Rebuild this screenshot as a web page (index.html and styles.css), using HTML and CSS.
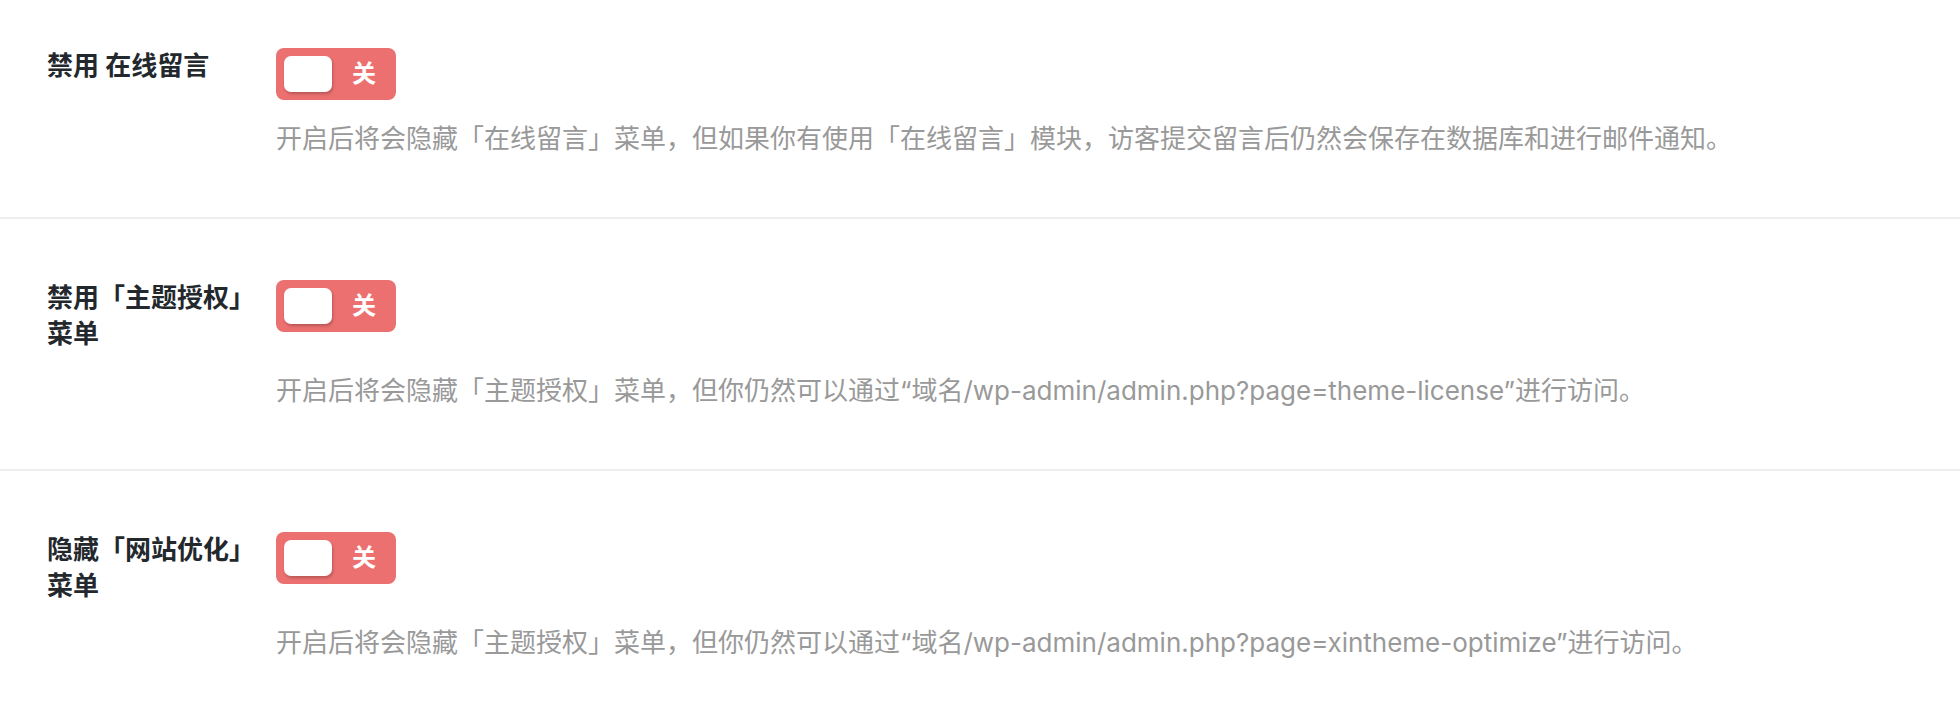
FILE: index.html
```html
<!DOCTYPE html>
<html lang="zh-CN">
<head>
  <meta charset="UTF-8" />
  <meta name="viewport" content="width=device-width, initial-scale=1.0" />
  <title>主题设置 - 菜单</title>
  <link rel="stylesheet" href="styles.css">
</head>
<body>
  <div class="options">

    <!-- 在线留言 -->
    <div class="field">
      <div class="field-title">禁用 在线留言</div>
      <div class="field-control">
        <span class="switcher"><span class="knob"></span><span class="switch-text">关</span></span>
      </div>
      <div class="field-desc">开启后将会隐藏「在线留言」菜单，但如果你有使用「在线留言」模块，访客提交留言后仍然会保存在数据库和进行邮件通知。</div>
    </div>

    <!-- 主题授权 -->
    <div class="field">
      <div class="field-title">禁用「主题授权」菜单</div>
      <div class="field-control">
        <span class="switcher"><span class="knob"></span><span class="switch-text">关</span></span>
      </div>
      <div class="field-desc">开启后将会隐藏「主题授权」菜单，但你仍然可以通过“域名/wp-admin/admin.php?page=theme-license”进行访问。</div>
    </div>

    <!-- 网站优化 -->
    <div class="field">
      <div class="field-title">隐藏「网站优化」菜单</div>
      <div class="field-control">
        <span class="switcher"><span class="knob"></span><span class="switch-text">关</span></span>
      </div>
      <div class="field-desc">开启后将会隐藏「主题授权」菜单，但你仍然可以通过“域名/wp-admin/admin.php?page=xintheme-optimize”进行访问。</div>
    </div>

  </div>
</body>
</html>
```

FILE: styles.css
```css
body {
  margin: 0;
  padding: 0;
  background-color: #fff;
  font-family: Inter, "Noto Sans CJK SC", sans-serif;
  font-size: 26px;
  line-height: 36px;
}

.field {
  display: grid;
  grid-template-columns: 229px 1fr;
  padding: 61px 0 60px 47px;
  border-bottom: 2px solid #eeeeee;
}

.field:first-child {
  padding-top: 48px;
}

.field:last-child {
  border-bottom: none;
}

.field-title {
  color: #23282d;
  font-weight: bold;
  padding-right: 12px;
}

.field-control {
  display: flex;
  align-items: flex-start;
}

.switcher {
  display: flex;
  align-items: center;
  width: 120px;
  height: 52px;
  box-sizing: border-box;
  padding: 8px 0 8px 8px;
  background-color: #ec7070;
  border-radius: 8px;
  cursor: pointer;
}

.knob {
  width: 48px;
  height: 36px;
  background-color: #fff;
  border-radius: 7px;
  box-shadow: 1px 2px 3px rgba(0, 0, 0, 0.22);
}

.switch-text {
  flex: 1;
  text-align: center;
  color: #fff;
  font-size: 24px;
  font-weight: 600;
}

.field-desc {
  grid-column: 2;
  margin-top: 21px;
  color: #999;
}
```
